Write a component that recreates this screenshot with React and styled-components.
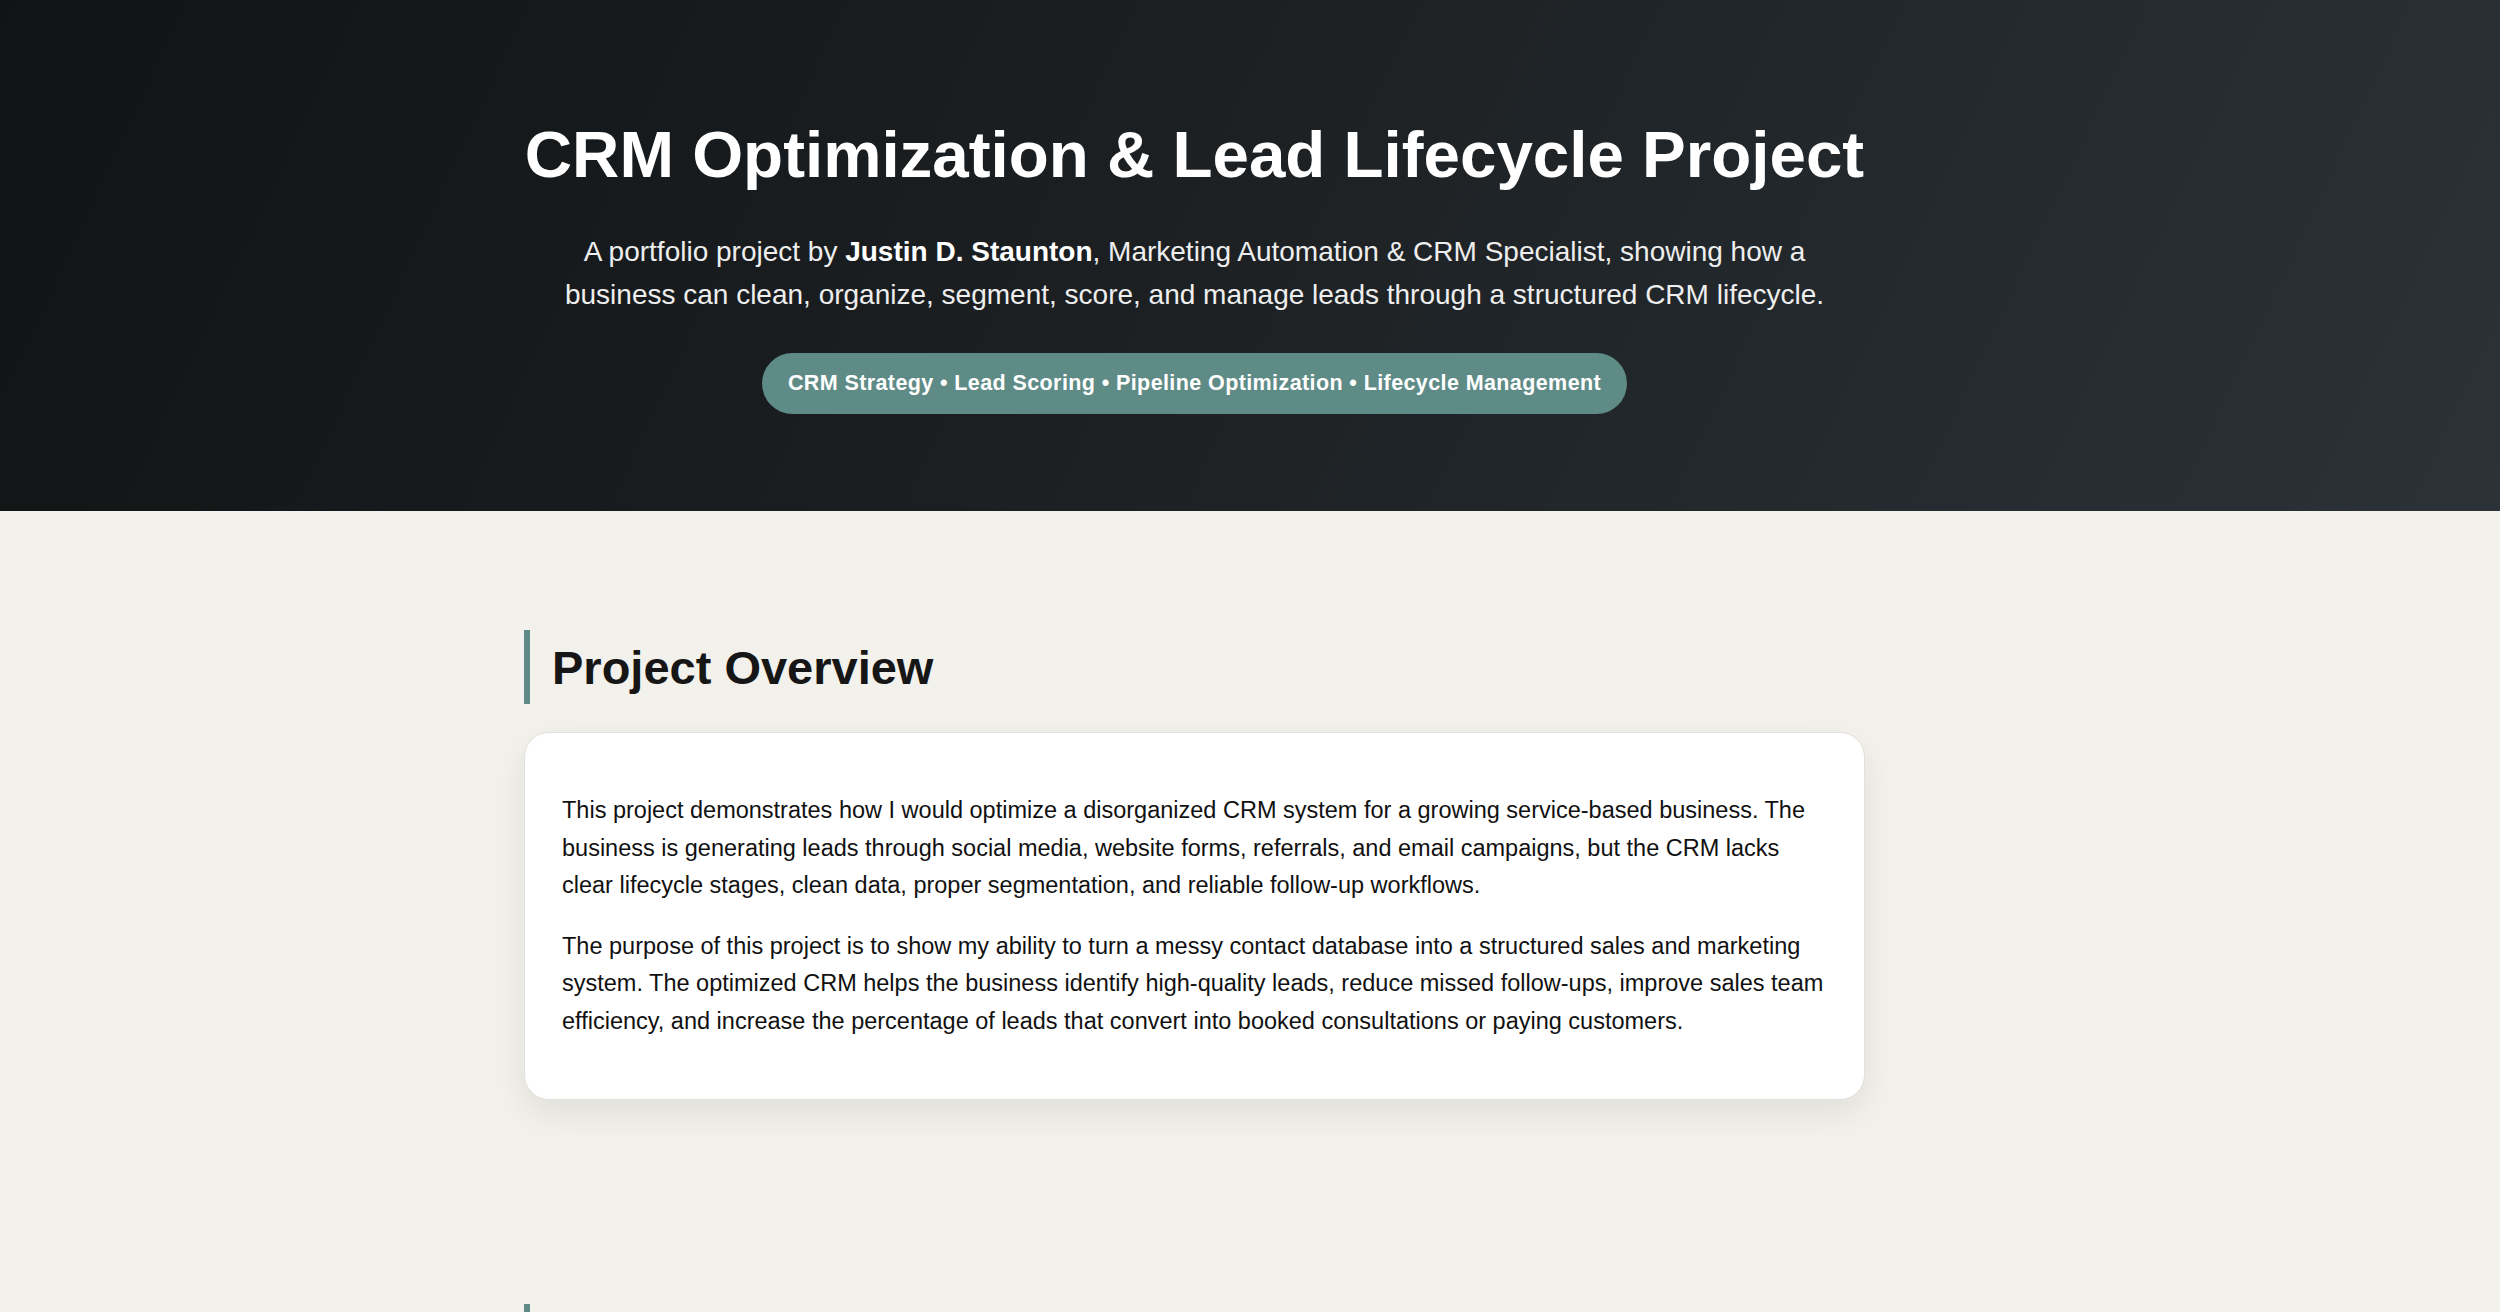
import React from "react";
import styled, { createGlobalStyle } from "styled-components";

const Global = createGlobalStyle`
  html, body { margin: 0; padding: 0; }
  body { background: #f3f1ec; font-family: "Liberation Sans", Arial, sans-serif; color: #161616; }
`;

const Hero = styled.header`
  background: linear-gradient(115deg, #111314 0%, #1d2124 50%, #2b3238 100%);
  color: #fff;
  padding: 113px 0 97px;
`;

const Inner = styled.div`
  width: 1341px;
  margin-left: calc(50% - 726px);
  display: flex;
  flex-direction: column;
  align-items: center;
  text-align: center;
`;

const Title = styled.h1`
  margin: 0;
  font-size: 65.5px;
  line-height: 84px;
  font-weight: 700;
  white-space: nowrap;
`;

const Sub = styled.p`
  margin: 33px 0 0;
  max-width: 1275px;
  font-size: 28px;
  line-height: 43px;
  color: #eeeeee;
  strong { color: #fff; }
`;

const Pill = styled.div`
  margin-top: 37px;
  background: #5f8b87;
  border-radius: 31px;
  height: 61px;
  padding: 0 26px;
  display: flex;
  align-items: center;
  font-size: 21.5px;
  letter-spacing: 0.4px;
  font-weight: 700;
  color: #fff;
`;

const Section = styled.section`
  width: 1341px;
  margin-left: calc(50% - 726px);
  padding-top: ${(p) => p.$top}px;
`;

const Heading = styled.h2`
  margin: 0 0 28px;
  border-left: 6px solid #5f8b87;
  padding-left: 22px;
  height: 74px;
  display: flex;
  align-items: center;
  font-size: 47px;
  font-weight: 700;
  color: #161616;
`;

const Card = styled.div`
  background: #fff;
  border: 1px solid #e3e0da;
  border-radius: 25px;
  padding: 36px 37px;
  box-shadow: 0 14px 36px rgba(0, 0, 0, 0.08);
  p {
    margin: 23px 0;
    font-size: 23.5px;
    line-height: 37.5px;
    color: #111;
  }
`;

export default function App() {
  return (
    <>
      <Global />
      <Hero>
        <Inner>
          <Title>CRM Optimization &amp; Lead Lifecycle Project</Title>
          <Sub>
            A portfolio project by <strong>Justin D. Staunton</strong>, Marketing Automation &amp; CRM Specialist, showing how a business can clean, organize, segment, score, and manage leads through a structured CRM lifecycle.
          </Sub>
          <Pill>CRM Strategy • Lead Scoring • Pipeline Optimization • Lifecycle Management</Pill>
        </Inner>
      </Hero>
      <Section $top={119}>
        <Heading>Project Overview</Heading>
        <Card>
          <p>
            This project demonstrates how I would optimize a disorganized CRM system for a growing service-based business. The business is generating leads through social media, website forms, referrals, and email campaigns, but the CRM lacks clear lifecycle stages, clean data, proper segmentation, and reliable follow-up workflows.
          </p>
          <p>
            The purpose of this project is to show my ability to turn a messy contact database into a structured sales and marketing system. The optimized CRM helps the business identify high-quality leads, reduce missed follow-ups, improve sales team efficiency, and increase the percentage of leads that convert into booked consultations or paying customers.
          </p>
        </Card>
      </Section>
      <Section $top={204}>
        <Heading>Lead Lifecycle Stages</Heading>
      </Section>
    </>
  );
}
